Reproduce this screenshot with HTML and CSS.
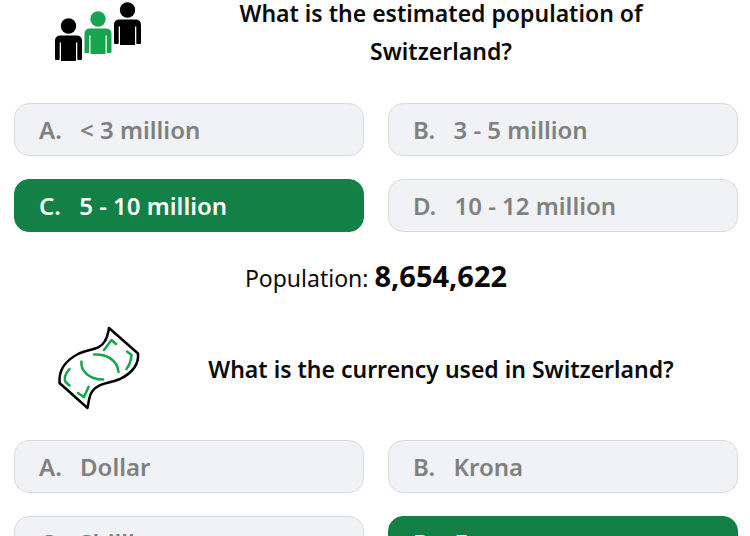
FILE: index.html
```html
<!DOCTYPE html>
<html lang="en">
<head>
    <meta charset="UTF-8">
    <meta name="viewport" content="width=device-width, initial-scale=1">
    <title>Switzerland Quiz</title>
    <link rel="stylesheet" href="styles.css">
</head>
<body>
    <main class="quiz">
        <section>
            <div class="question">
                <svg class="icon" viewBox="0 0 88 88" aria-hidden="true">
                    <defs>
                        <g id="person">
                            <circle cx="14.500" cy="8" r="7.700"/>
                            <path d="M6.500 17.500H22.500Q28 17.500 28 23V41Q28 42 27 42H24Q23.300 42 23.300 41V24.500H22V43H7V24.500H5.700V41Q5.700 42 5 42H2Q1 42 1 41V23Q1 17.500 6.500 17.500Z"/>
                        </g>
                    </defs>
                    <use href="#person" x="0" y="30"/>
                    <use href="#person" x="29.500" y="23" class="green"/>
                    <use href="#person" x="59" y="14"/>
                </svg>
                <h2>What is the estimated population of Switzerland?</h2>
            </div>
            <div class="answers">
                <button type="button"><span>A.</span> &lt; 3 million</button>
                <button type="button"><span>B.</span> 3 - 5 million</button>
                <button type="button" class="correct"><span>C.</span> 5 - 10 million</button>
                <button type="button"><span>D.</span> 10 - 12 million</button>
            </div>
            <p class="result">Population: <strong>8,654,622</strong></p>
        </section>

        <section>
            <div class="question">
                <svg class="icon" viewBox="0 0 88 88" aria-hidden="true">
                    <g class="note">
                        <path d="M55 3L84 28.500C85 39.500 78 48 66 54C55 59 46 57 38.500 66C34.500 71 35 77 33.500 83L5.500 58C4.500 45 12 35 25 28.500C36 23.500 46 25 51 16C54 11 54 8 55 3Z"/>
                        <path class="line" d="M50 25L57.500 15L62 19M73 26.500L77.500 30Q77 38 72.500 44M40 29.500C52 28.500 63.500 35 64.500 47M27.500 36.500C26 47 37 54.500 49 54.500M15.500 44Q9 51 11.500 57L15.500 60.500M24 68L30 72L34.500 62"/>
                    </g>
                </svg>
                <h2>What is the currency used in Switzerland?</h2>
            </div>
            <div class="answers">
                <button type="button"><span>A.</span> Dollar</button>
                <button type="button"><span>B.</span> Krona</button>
                <button type="button"><span>C.</span> Shilling</button>
                <button type="button" class="correct"><span>D.</span> Franc</button>
            </div>
        </section>
    </main>
</body>
</html>
```

FILE: styles.css
```css
body {
    margin: 0;
    background-color: #fff;
    color: #0a0a0a;
    font-family: "Noto Sans", "Open Sans", sans-serif;
    font-size: 24px;
}
.quiz {
    margin-top: -12px;
    padding: 0 12px 24px 14px;
}
.question {
    display: flex;
    align-items: center;
    gap: 58px;
    padding: 0 56px 0 40px;
    margin-bottom: 27px;
}
.icon {
    flex: none;
    width: 88px;
    height: 88px;
}
.green {
    fill: #16a44e;
}
.note {
    fill: none;
    stroke: #000;
    stroke-width: 2.5;
    stroke-linecap: round;
    stroke-linejoin: round;
}
.note .line {
    stroke: #16a44e;
}
h2 {
    flex: 1;
    margin: 0;
    font-size: 23px;
    font-weight: 600;
    line-height: 38px;
    text-align: center;
}
.answers {
    display: grid;
    grid-template-columns: 1fr 1fr;
    gap: 23px 24px;
}
button {
    min-height: 53px;
    padding: 0 24px;
    border: 1px solid #d9dbde;
    border-radius: 15px;
    background-color: #f0f2f5;
    color: #808080;
    font-family: inherit;
    font-size: 24px;
    font-weight: 600;
    text-align: left;
    cursor: pointer;
}
button span {
    margin-right: 12px;
}
button.correct {
    border-color: #138046;
    background-color: #138046;
    color: #fff;
}
.result {
    margin: 0;
    font-size: 23px;
    line-height: 93px;
    text-align: center;
}
.result strong {
    font-size: 29px;
    font-weight: 700;
    line-height: 1;
}
```
